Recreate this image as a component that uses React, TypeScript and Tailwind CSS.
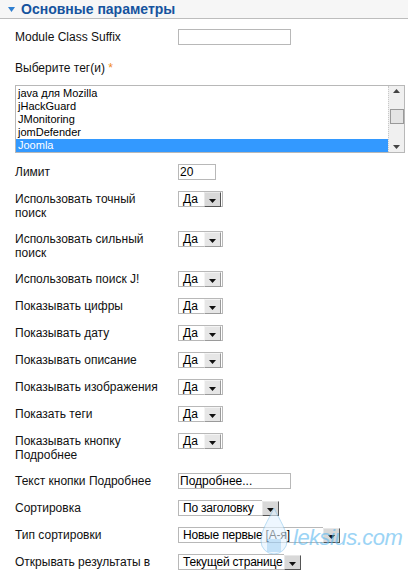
import React from "react";

const tags = ["Java", "java для Mozilla", "jHackGuard", "JMonitoring", "jomDefender", "Joomla"];

type Row =
  | { label: string; kind: "yesno" }
  | { label: string; kind: "text"; value: string; w: string }
  | { label: string; kind: "select"; value: string; w: string };

const rows: Row[] = [
  { label: "Лимит", kind: "text", value: "20", w: "w-[38px]" },
  { label: "Использовать точный поиск", kind: "yesno" },
  { label: "Использовать сильный поиск", kind: "yesno" },
  { label: "Использовать поиск J!", kind: "yesno" },
  { label: "Показывать цифры", kind: "yesno" },
  { label: "Показывать дату", kind: "yesno" },
  { label: "Показывать описание", kind: "yesno" },
  { label: "Показывать изображения", kind: "yesno" },
  { label: "Показать теги", kind: "yesno" },
  { label: "Показывать кнопку Подробнее", kind: "yesno" },
  { label: "Текст кнопки Подробнее", kind: "text", value: "Подробнее...", w: "w-[113px]" },
  { label: "Сортировка", kind: "select", value: "По заголовку", w: "w-[84px]" },
  { label: "Тип сортировки", kind: "select", value: "Новые первые [А-я]", w: "w-[145px]" },
  { label: "Открывать результаты в", kind: "select", value: "Текущей странице", w: "w-[106px]" },
];

function Arrow({ dark }: { dark?: boolean }) {
  return (
    <div
      className={
        "relative flex h-[15px] w-[17px] shrink-0 items-end justify-center pb-[3px] " +
        (dark
          ? "border border-t-[#e8e8e8] border-l-[#e8e8e8] border-r-[#555] border-b-[#555] bg-[#d8d8d8]"
          : "border border-[#f4f4f4] border-r-[#9a9a9a] border-b-[#9a9a9a] bg-[#e6e6e6]")
      }
    >
      <svg width="7" height="4" viewBox="0 0 7 4">
        <path d="M0 0h7L3.5 4z" fill="#111" />
      </svg>
    </div>
  );
}

function YesNo({ pressed }: { pressed?: boolean }) {
  return (
    <div className="flex h-4 w-[45px] items-center justify-between border border-[#b8b8b8] bg-white pl-[4px] pr-[1px]">
      <span className="text-[12px] leading-[14px] text-black">Да</span>
      <Arrow dark={pressed} />
    </div>
  );
}

function Select({ value, w }: { value: string; w: string }) {
  return (
    <div className="flex h-4 items-center">
      <div className={"flex h-4 items-center border border-r-0 border-[#b8b8b8] bg-white pl-[4px] " + w}>
        <span className="whitespace-nowrap text-[12px] leading-[14px] tracking-[-0.2px] text-black">{value}</span>
      </div>
      <Arrow dark />
    </div>
  );
}

function TextBox({ value, w }: { value: string; w: string }) {
  return (
    <div className={"flex h-4 items-center border border-[#b8b8b8] bg-white pl-[1px] " + w}>
      <span className="whitespace-nowrap text-[12px] leading-[14px] text-black">{value}</span>
    </div>
  );
}

function Listbox() {
  return (
    <div className="flex h-[68px] w-[390px] border border-[#b8b8b8] bg-white">
      <div className="flex-1 overflow-hidden">
        <div className="-mt-[12px] text-[11px] leading-[13px] text-black">
          {tags.map((t) => (
            <div
              key={t}
              className={"h-[13px] pl-[2px] " + (t === "Joomla" ? "bg-[#3399ff] text-white" : "")}
            >
              {t}
            </div>
          ))}
        </div>
      </div>
      <div className="flex w-[16px] flex-col items-center justify-between border-l border-dotted border-[#c8c8c8] bg-[#f0f0f0] py-[3px]">
        <svg width="7" height="4" viewBox="0 0 7 4">
          <path d="M3.5 0L7 4H0z" fill="#444" />
        </svg>
        <div className="-mt-[6px] h-[15px] w-[14px] border border-[#999] bg-[#e4e4e4]" />
        <svg width="7" height="4" viewBox="0 0 7 4">
          <path d="M0 0h7L3.5 4z" fill="#444" />
        </svg>
      </div>
    </div>
  );
}

export default function App() {
  return (
    <div
      className="relative h-[576px] w-[408px] overflow-hidden bg-white text-[12px] text-[#111]"
      style={{ fontFamily: '"Liberation Sans", Arial, sans-serif' }}
    >
      {/* section header */}
      <div className="flex h-[19px] items-center gap-[6px] border-b border-[#bdbdbd] bg-[#f6f6f6] pl-[8px]">
        <svg width="7" height="5" viewBox="0 0 7 5">
          <path d="M0 0h7L3.5 5z" fill="#2f7fd0" />
        </svg>
        <span className="text-[14px] font-bold leading-[16px] text-[#15539e]">Основные параметры</span>
      </div>

      <div className="pl-[15px] pt-[10px]">
        <div className="flex items-start pb-[16px]">
          <div className="mt-[1px] w-[163px] leading-[14px]">Module Class Suffix</div>
          <TextBox value="" w="w-[113px]" />
        </div>

        <div className="pb-[10px] leading-[14px]">
          Выберите тег(и) <span className="text-[#f08a24]">*</span>
        </div>
        <div className="pb-[11px]">
          <Listbox />
        </div>

        {rows.map((r, i) => (
          <div key={r.label} className="flex items-start pb-[11px]">
            <div className="mt-[1px] w-[163px] pr-[12px] leading-[14px]">{r.label}</div>
            {r.kind === "yesno" && <YesNo pressed={i === 1} />}
            {r.kind === "text" && <TextBox value={r.value} w={r.w} />}
            {r.kind === "select" && <Select value={r.value} w={r.w} />}
          </div>
        ))}
      </div>

      {/* site watermark */}
      <div className="pointer-events-none absolute left-[258px] top-[506px] flex items-end gap-[3px] opacity-60">
        <svg width="32" height="52" viewBox="0 0 32 52">
          <path d="M16 2C10 15 3 24 3 35a13 13 0 0 0 26 0C29 24 22 15 16 2z" fill="#e3f3ff" stroke="#8cc8f0" strokeWidth="1" />
          <path d="M9 33h14v13H9z" fill="#6fb8ee" opacity="0.6" />
        </svg>
        <span className="mb-[8px] text-[22px] italic leading-[24px] tracking-[-0.5px] text-[#5ab8f0]">leksius.com</span>
      </div>
    </div>
  );
}
